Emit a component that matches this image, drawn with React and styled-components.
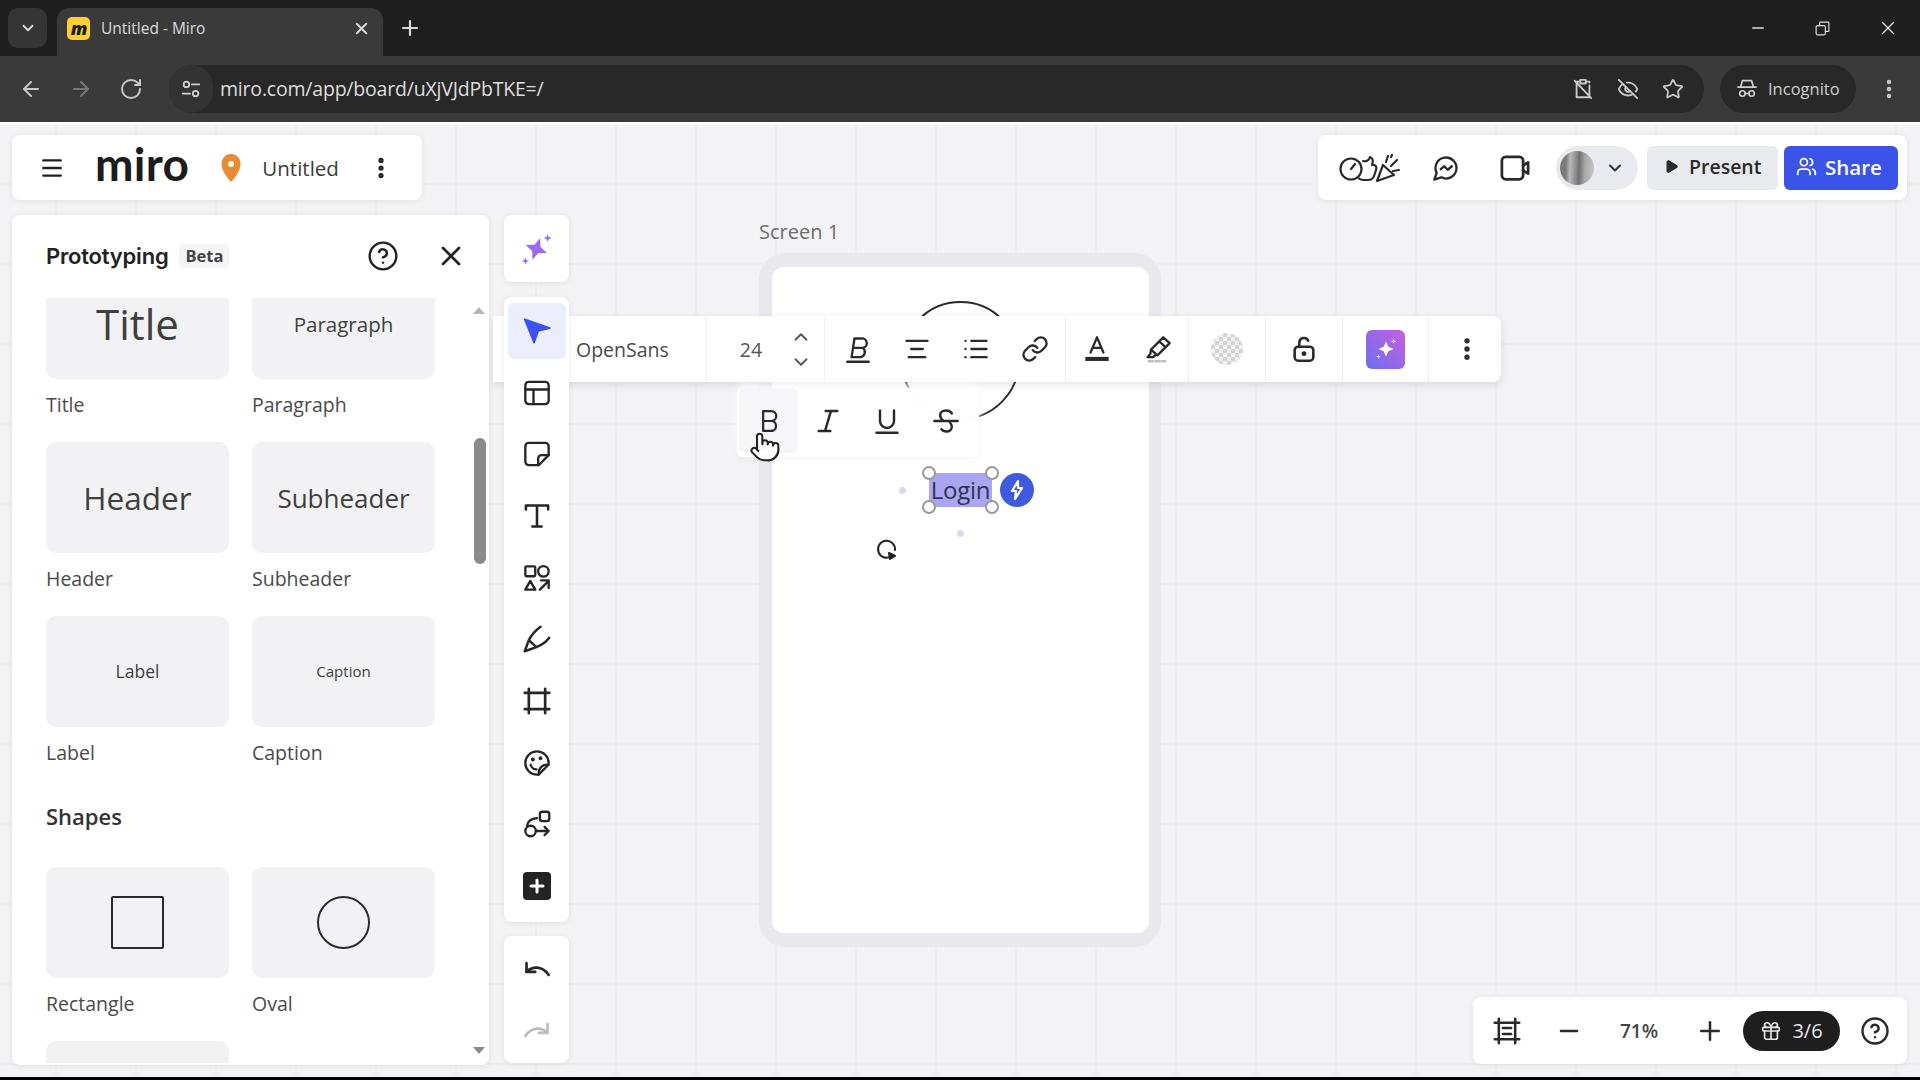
import React from 'react';
import styled, { createGlobalStyle } from 'styled-components';
import {
  ChevronDown, ChevronUp, X, Plus, Minus, ArrowLeft, ArrowRight, RotateCw, EyeOff, Star,
  EllipsisVertical, Menu, CircleHelp, Play, Users, Gift, Pointer,
  AlignCenter, List, Link,
} from 'lucide-react';

const Global = createGlobalStyle`
  html, body { margin: 0; padding: 0; background: #000; }
  body { width: 1920px; height: 1080px; overflow: hidden; font-family: "Open Sans", "Liberation Sans", sans-serif; }
  * { box-sizing: border-box; }
`;

const Page = styled.div`
  width: 1920px; height: 1077px; display: flex; flex-direction: column; overflow: hidden;
`;

/* browser chrome */
const TabStrip = styled.div`
  height: 56px; background: #1f1f1f; display: flex; align-items: flex-end; padding-left: 8px; color: #d8d8d8; flex: none;
`;
const TabMenu = styled.div`
  width: 39px; height: 40px; margin-bottom: 8px; border-radius: 10px; background: #353535; display: flex; align-items: center; justify-content: center;
`;
const Tab = styled.div`
  width: 326px; height: 48px; margin-left: 10px; background: #3a3a3a; border-radius: 12px 12px 0 0; display: flex; align-items: center; padding: 0 12px 8px 10px; position: relative;
`;
const Favicon = styled.span`
  width: 23px; height: 23px; border-radius: 5px; background: #ffd02f; color: #1c1c1c; font: italic 800 18px/22px "Open Sans", sans-serif; text-align: center; letter-spacing: -1px;
`;
const TabTitle = styled.span`
  margin-left: 11px; font: 400 15.5px "Open Sans", sans-serif; color: #dcdcdc; flex: 1;
`;
const NewTab = styled.div`
  margin: 0 0 16px 15px; height: 24px; display: flex; color: #d8d8d8;
`;
const WindowControls = styled.div`
  margin-left: auto; height: 56px; display: flex; align-items: center; color: #e0e0e0;
`;
const WindowButton = styled.div`
  width: 65px; display: flex; justify-content: center;
`;
const Toolbar = styled.div`
  height: 66px; background: #3a3a3a; display: flex; align-items: center; color: #c8c8c8; flex: none;
`;
const NavGroup = styled.div`
  display: flex; gap: 26px; padding-left: 19px;
`;
const Address = styled.div`
  margin-left: 26px; width: 1535px; height: 48px; border-radius: 24px; background: #282828; display: flex; align-items: center; padding-right: 20px;
`;
const SiteChip = styled.div`
  width: 44px; height: 48px; border-radius: 24px; background: #333; display: flex; align-items: center; justify-content: center; color: #d0d0d0;
`;
const Url = styled.span`
  margin-left: 7px; padding-bottom: 2px; font: 400 19.5px "Open Sans", sans-serif; color: #dedede; flex: 1; letter-spacing: -0.2px;
`;
const AddressIcons = styled.div`
  display: flex; gap: 23px; color: #c8c8c8;
`;
const IncognitoPill = styled.div`
  margin-left: 16px; width: 136px; height: 48px; border-radius: 24px; background: #282828; display: flex; align-items: center; padding: 0 0 2px 16px; gap: 10px; color: #d0d0d0; font: 400 16.5px "Open Sans", sans-serif;
`;
const ChromeMenu = styled.div`
  margin-left: auto; padding-right: 19px; display: flex;
`;

/* board */
const Board = styled.div`
  position: relative; flex: 1; border-top: 2px solid #fff; background-color: #f3f3f5;
  background-image: linear-gradient(#ededf0 2px, transparent 2px), linear-gradient(90deg, #ededf0 2px, transparent 2px);
  background-size: 80px 80px; background-position: 55px 59px;
  display: flex; flex-direction: column; padding: 11px 13px 12px 12px; overflow: hidden;
`;
const ChromeRow = styled.div`
  position: relative; z-index: 2; display: flex; justify-content: space-between; height: 65px; margin-bottom: 15px; flex: none;
`;
const WorkRow = styled.div`
  position: relative; z-index: 2; flex: 1; display: flex; min-height: 0;
`;
const Card = styled.div`
  background: #fff; border-radius: 8px; box-shadow: 0 1px 6px rgba(30, 30, 60, 0.08);
`;
const BoardCard = styled(Card)`
  width: 410px; display: flex; align-items: center; padding-left: 27px; color: #1f1f1f;
`;
const Logo = styled.span`
  margin-left: 30px; font: 700 46px/1 "Lato", sans-serif; letter-spacing: 0.3px; color: #1c1c1c; position: relative; top: -4px;
`;
const Pin = styled.svg`
  margin-left: 31px; width: 22px; height: 30px;
`;
const BoardName = styled.span`
  margin-left: 20px; font: 400 20.5px "Open Sans", sans-serif; color: #3a3a3a; width: 78px;
`;
const BoardMenu = styled.div`
  margin-left: 28px; display: flex;
`;
const ActionCard = styled(Card)`
  width: 589px; display: flex; align-items: center; padding-left: 21px; color: #2a2a2a;
`;
const ActionIcon = styled.div`
  margin-left: ${p => p.$ml || 0}px; display: flex;
`;
const AvatarPill = styled.div`
  margin-left: 26px; width: 82px; height: 44px; border-radius: 22px; background: #e9eaef; display: flex; align-items: center; padding-left: 4px; gap: 11px; color: #333;
`;
const Avatar = styled.div`
  width: 34px; height: 34px; border-radius: 50%; background: linear-gradient(92deg, #7a7a7a 0 18%, #b9b9b9 30%, #8a8a8a 48%, #6f6f6f 56%, #a8a8a8 72%, #c6c6c6 100%);
`;
const Present = styled.div`
  margin-left: 9px; width: 131px; height: 44px; border-radius: 6px; background: #e9eaef; display: flex; align-items: center; padding: 0 0 2px 17px; gap: 10px; color: #2a2a2a; font: 600 19.5px "Open Sans", sans-serif;
`;
const Share = styled.div`
  margin-left: 6px; width: 114px; height: 44px; border-radius: 6px; background: #3a53e8; display: flex; align-items: center; padding: 0 0 2px 12px; gap: 8px; color: #fff; font: 600 20.5px "Open Sans", sans-serif;
`;

/* left panel */
const Panel = styled(Card)`
  width: 477px; height: 850px; display: flex; flex-direction: column; flex: none;
`;
const PanelHeader = styled.div`
  height: 83px; display: flex; align-items: center; padding: 0 0 2px 34px; flex: none; color: #222;
`;
const PanelTitle = styled.span`
  font: 600 22px "Inter", sans-serif; letter-spacing: -0.2px; color: #222;
`;
const Beta = styled.span`
  margin-left: 11px; padding: 0 6px; height: 24px; background: #f4f4f6; border-radius: 4px; font: 700 16.5px/23px "Open Sans", sans-serif; color: #444;
`;
const PanelButtons = styled.div`
  margin-left: auto; display: flex; align-items: center; gap: 36px; padding-right: 22px;
`;
const ScrollArea = styled.div`
  position: relative; flex: 1; overflow: hidden; padding: 0 34px; margin-bottom: 2px; border-radius: 0 0 8px 8px;
`;
const ItemGrid = styled.div`
  display: grid; grid-template-columns: 183px 183px; column-gap: 23px; row-gap: 25px;
`;
const Tile = styled.div`
  height: 111px; border-radius: 10px; background: #f2f2f4; display: flex; align-items: center; justify-content: center; color: #3f3f3f;
  font: 400 ${p => p.$size}px/1 "Open Sans", sans-serif;
  ${p => (p.$cutTop ? 'height: 81px; padding-bottom: 29px; border-radius: 0 0 10px 10px;' : '')}
`;
const ItemLabel = styled.div`
  margin-top: 14px; height: 24px; font: 400 19.5px/24px "Open Sans", sans-serif; color: #4a4a4a;
`;
const SectionTitle = styled.div`
  margin: 37px 0 37px; font: 600 22px/28px "Open Sans", sans-serif; color: #333;
`;
const ScrollThumb = styled.div`
  position: absolute; left: 462px; top: 140px; width: 12px; height: 126px; border-radius: 6px; background: #8a8a8a;
`;
const ScrollArrow = styled.div`
  position: absolute; left: 461px; ${p => (p.$up ? 'top: 9px;' : 'bottom: 9px;')}
  width: 0; height: 0; border-left: 6px solid transparent; border-right: 6px solid transparent;
  ${p => (p.$up ? 'border-bottom: 7px solid #b5b5b5;' : 'border-top: 7px solid #8a8a8a;')}
`;
const RectShape = styled.div`
  width: 53px; height: 53px; border: 2.5px solid #2b2b2b; border-radius: 2px;
`;
const OvalShape = styled.div`
  width: 53px; height: 53px; border: 2.5px solid #2b2b2b; border-radius: 50%;
`;

/* tool column */
const ToolColumn = styled.div`
  margin-left: 15px; width: 65px; display: flex; flex-direction: column; flex: none;
`;
const ToolCard = styled(Card)`
  padding: ${p => p.$pad || '3px 0 5px'}; margin-bottom: ${p => p.$mb || 0}px; display: flex; flex-direction: column; align-items: center;
`;
const ToolButton = styled.div`
  width: 100%; height: ${p => p.$h || 61.7}px; display: flex; align-items: center; justify-content: center; color: ${p => p.$color || '#262626'};
  position: relative;
`;
const ActiveBack = styled.div`
  position: absolute; left: 4px; right: 3px; top: 3px; bottom: 3px; border-radius: 6px; background: #eceefc;
`;
const ArrowGlyph = styled.svg`
  position: relative; width: 28px; height: 28px;
`;
const ZoomBar = styled(Card)`
  margin-left: auto; align-self: flex-end; width: 434px; height: 67px; display: flex; align-items: center; padding-left: 20px; color: #2a2a2a; margin-bottom: 1px;
`;
const ZoomValue = styled.span`
  width: 70px; margin: 0 21px 0 21px; text-align: center; font: 600 19px "Open Sans", sans-serif; color: #444;
`;
const GiftPill = styled.div`
  margin-left: 18px; width: 97px; height: 40px; border-radius: 20px; background: #1e1e1e; color: #e8e8e8; display: flex; align-items: center; justify-content: center; gap: 10px; font: 400 20px "Open Sans", sans-serif;
`;

/* items on the canvas */
const Artboard = styled.div`
  position: absolute; inset: 0; z-index: 1;
`;
const FrameLabel = styled.span`
  position: absolute; left: 759px; top: 94px; font: 400 20px "Open Sans", sans-serif; color: #6c6c6c;
`;
const PhoneFrame = styled.div`
  position: absolute; left: 759px; top: 129px; width: 402px; height: 694px; border-radius: 26px; background: #e9e9ed;
`;
const PhoneScreen = styled.div`
  position: absolute; left: 13px; top: 14px; width: 377px; height: 666px; border-radius: 12px; background: #fff;
`;
const ProfileCircle = styled.div`
  position: absolute; left: 901px; top: 177px; width: 119px; height: 119px; border-radius: 50%; border: 2px solid #2a2a2a;
`;
const Selection = styled.div`
  position: absolute; left: 929px; top: 349px; width: 63px; height: 34px; background: #aaa6f4; color: #33334f; font: 400 24px/33px "Open Sans", sans-serif; text-align: center; letter-spacing: -0.3px;
`;
const Handle = styled.span`
  position: absolute; ${p => (p.$r ? 'right: -7px;' : 'left: -7px;')} ${p => (p.$b ? 'bottom: -7px;' : 'top: -7px;')}
  width: 14px; height: 14px; border-radius: 50%; background: #fff; border: 2px solid #9a9a9a;
`;
const Bolt = styled.div`
  position: absolute; left: 1000px; top: 349px; width: 34px; height: 34px; border-radius: 50%; background: #3e5ae0; color: #fff; display: flex; align-items: center; justify-content: center;
`;
const Dot = styled.span`
  position: absolute; left: ${p => p.$x}px; top: ${p => p.$y}px; width: 7px; height: 7px; border-radius: 50%; background: #d8d9f5;
`;
const RotateMark = styled.div`
  position: absolute; left: 876px; top: 412px; display: flex; color: #222;
`;
const FormatBar = styled.div`
  position: absolute; left: 493px; top: 192px; width: 1008px; height: 66px; background: #fff; border-radius: 0 8px 8px 0; display: flex; box-shadow: 0 3px 8px rgba(30, 30, 60, 0.12); color: #2a2a2a;
`;
const FormatSection = styled.div`
  width: ${p => p.$w}px; height: 100%; display: flex; align-items: center; justify-content: ${p => p.$justify || 'space-around'};
  border-right: ${p => (p.$last ? 'none' : '1px solid #f1f1f3')}; flex: none; padding: ${p => p.$pad || 0};
`;
const FontName = styled.span`
  font: 400 19.5px "Open Sans", sans-serif; color: #4a4a4a;
`;
const SizeValue = styled.span`
  font: 400 19.5px "Open Sans", sans-serif; color: #555; width: 46px; margin-left: 21px; text-align: center;
`;
const Stepper = styled.div`
  margin-left: 16px; display: flex; flex-direction: column; gap: 3px; color: #555;
`;
const Opacity = styled.div`
  width: 32px; height: 32px; border-radius: 50%; background: repeating-conic-gradient(#d4d4d4 0 25%, #f2f2f2 0 50%) 0 0 / 8px 8px;
`;
const AiSquare = styled.div`
  width: 39px; height: 39px; border-radius: 6px; background: linear-gradient(45deg, #6a70f0, #c75fe0); color: #fff; display: flex; align-items: center; justify-content: center;
`;
const StyleBar = styled.div`
  position: absolute; left: 737px; top: 264px; width: 242px; height: 69px; padding: 0 0 4px 2px; background: rgba(255, 255, 255, 0.98); border-radius: 6px; display: flex; align-items: center; box-shadow: 0 -3px 8px rgba(255, 255, 255, 0.95), 0 2px 8px rgba(30, 30, 60, 0.05); color: #2a2a2a;
`;
const StyleButton = styled.div`
  width: 59px; height: 100%; display: flex; align-items: center; justify-content: center; background: ${p => (p.$on ? '#f6f6f8' : 'transparent')}; border-radius: 6px;
`;
const HandCursor = styled.div`
  position: absolute; left: 749px; top: 307px; display: flex; color: #222;
`;

const I = ({ s = 28, w = 2, vb = '0 0 24 24', children, fill = 'none', width }) => (
  <svg width={width || s} height={s} viewBox={vb} fill={fill} stroke="currentColor" strokeWidth={w} strokeLinecap="round" strokeLinejoin="round">{children}</svg>
);

const Sparkle = ({ s = 34, color = '#9a6bf0' }) => (
  <svg width={s} height={s} viewBox="0 0 24 24" fill={color}>
    <path transform="rotate(20 11.500 12)" d="M11.500 4l2.300 5.700 5.700 2.300-5.700 2.300-2.300 5.700-2.300-5.700L3.500 12l5.700-2.300z" />
    <path d="M19.500 1.500l.8 2 2 .8-2 .8-.8 2-.8-2-2-.8 2-.8z" />
    <path d="M3.800 18l.7 1.800 1.800.7-1.800.7-.7 1.800-.7-1.800-1.800-.7 1.800-.7z" />
  </svg>
);
const FourStar = () => (
  <svg width="28" height="28" viewBox="0 0 24 24" fill="currentColor">
    <path d="M12 5.500l2 4.500 4.500 2-4.500 2-2 4.500-2-4.500-4.500-2 4.500-2z" />
    <path d="M18.500 3l.6 1.900 1.900.6-1.900.6-.6 1.900-.6-1.900-1.900-.6 1.900-.6z" />
    <path d="M5.500 16.500l.5 1.500 1.500.5-1.500.5-.5 1.500-.5-1.500-1.500-.5 1.500-.5z" />
  </svg>
);

const tiles = [
  ['Title', 'Title', 42], ['Paragraph', 'Paragraph', 20.5],
  ['Header', 'Header', 31.5], ['Subheader', 'Subheader', 26],
  ['Label', 'Label', 17.5], ['Caption', 'Caption', 15],
];

export default function App() {
  return (
    <Page>
      <Global />
      <TabStrip>
        <TabMenu><ChevronDown size={18} strokeWidth={2.5} /></TabMenu>
        <Tab>
          <Favicon>m</Favicon>
          <TabTitle>Untitled - Miro</TabTitle>
          <X size={19} strokeWidth={2.5} />
        </Tab>
        <NewTab><Plus size={24} strokeWidth={2.2} /></NewTab>
        <WindowControls>
          <WindowButton><Minus size={18} /></WindowButton>
          <WindowButton>
            <I s={17} w={1.6}><rect x="3" y="8" width="13" height="13" rx="2" /><path d="M8 8V4a1 1 0 0 1 1-1h11a1 1 0 0 1 1 1v11a1 1 0 0 1-1 1h-4" /></I>
          </WindowButton>
          <WindowButton><X size={22} strokeWidth={1.5} /></WindowButton>
        </WindowControls>
      </TabStrip>
      <Toolbar>
        <NavGroup>
          <ArrowLeft size={24} strokeWidth={2} />
          <ArrowRight size={24} strokeWidth={2} color="#777" />
          <RotateCw size={24} strokeWidth={2} />
        </NavGroup>
        <Address>
          <SiteChip>
            <I s={22} w={2}><circle cx="7" cy="7" r="3" /><path d="M13 7h8M3 17h8" /><circle cx="17" cy="17" r="3" /></I>
          </SiteChip>
          <Url>miro.com/app/board/uXjVJdPbTKE=/</Url>
          <AddressIcons>
            <I s={22} w={2}><path d="M8 4H5v17h14V8M15 4h4v1M9 2h6v4H9zM3 3l18 19" /></I>
            <EyeOff size={22} strokeWidth={2} />
            <Star size={22} strokeWidth={2} />
          </AddressIcons>
        </Address>
        <IncognitoPill>
          <I s={22} w={1.8}><path d="M5 11l2-7h10l2 7M2 11h20" /><circle cx="7" cy="18" r="3" /><circle cx="17" cy="18" r="3" /><path d="M10 18h4" /></I>
          Incognito
        </IncognitoPill>
        <ChromeMenu><EllipsisVertical size={24} strokeWidth={2.5} /></ChromeMenu>
      </Toolbar>
      <Board>
        <Artboard>
          <FrameLabel>Screen 1</FrameLabel>
          <PhoneFrame><PhoneScreen /></PhoneFrame>
          <ProfileCircle />
          <Dot $x={899} $y={363} />
          <Dot $x={957} $y={406} />
          <Selection>
            Login
            <Handle /><Handle $r /><Handle $b /><Handle $r $b />
          </Selection>
          <Bolt><I s={24} w={2.2}><path d="M13 3L7 13h4l-1 8 7-11h-4z" /></I></Bolt>
          <RotateMark>
            <I s={24} w={2}><path d="M15 20.500a8.500 8.500 0 1 1 4-6.500" /><path d="M13 17l6 3-5 3z" fill="currentColor" /></I>
          </RotateMark>
          <FormatBar>
            <FormatSection $w={214} $justify="flex-start" $pad="0 0 0 83px"><FontName>OpenSans</FontName></FormatSection>
            <FormatSection $w={118} $justify="flex-start">
              <SizeValue>24</SizeValue>
              <Stepper><ChevronUp size={22} /><ChevronDown size={22} /></Stepper>
            </FormatSection>
            <FormatSection $w={241} $pad="0 0 0 3px">
              <I><path d="M9 3h6a4 4 0 0 1 1 8 4.500 4.500 0 0 1-1.500 8H6.500zM7.800 11h8.200" /><path d="M3 23h18" strokeWidth="2.4" /></I>
              <AlignCenter size={28} strokeWidth={2} />
              <List size={28} strokeWidth={2} />
              <Link size={28} strokeWidth={2} />
            </FormatSection>
            <FormatSection $w={123}>
              <I><path d="M6.500 15L12 2l5.500 13M8.500 11h7" /><path d="M2 20.500h20" strokeWidth="3.500" strokeLinecap="butt" /></I>
              <I><path d="M16.500 2l5.500 5-10.500 10.500-5.500-5zM6 12.500l-.5 3.500-2.500 3h5l1.500-1.500M13 5.500l5.500 5" /><path d="M4 22.500h14" stroke="#bdbdbd" strokeDasharray="4 2" /></I>
            </FormatSection>
            <FormatSection $w={77}><Opacity /></FormatSection>
            <FormatSection $w={77}>
              <I w={2.2}><rect x="4" y="10" width="16" height="12" rx="3" /><circle cx="12" cy="16" r="1" fill="currentColor" /><path d="M8 10V6.500a4 4 0 0 1 7.600-1.700" /></I>
            </FormatSection>
            <FormatSection $w={86}><AiSquare><FourStar /></AiSquare></FormatSection>
            <FormatSection $w={72} $last $pad="0 0 0 4px"><EllipsisVertical size={28} strokeWidth={2.6} /></FormatSection>
          </FormatBar>
          <StyleBar>
            <StyleButton $on>
              <I w={1.9}><path d="M7 3.500h7a4.200 4.200 0 0 1 0 8.500H7zM7 12h8a4.500 4.500 0 0 1 0 8.500H7z" /></I>
            </StyleButton>
            <StyleButton>
              <I w={2.1}><path d="M10 3.500h10M4 20.500h10M14.500 3.500l-5 17" /></I>
            </StyleButton>
            <StyleButton>
              <I w={2.1}><path d="M6 3v9a6 6 0 0 0 12 0V3M3 22h18" /></I>
            </StyleButton>
            <StyleButton>
              <I w={2.1}><path d="M2 12h20M17 5.500C16 3.500 14 3 12 3c-3 0-5 1.500-5 4 0 2 1 3.500 3 5M8 19c1 1.500 2.500 2 4.500 2 2.500 0 4.500-1.500 4.500-4 0-1.500-.5-2.500-1.500-3.500" /></I>
            </StyleButton>
          </StyleBar>
          <HandCursor><Pointer size={32} strokeWidth={1.5} fill="#fff" /></HandCursor>
        </Artboard>

        <ChromeRow>
          <BoardCard>
            <Menu size={26} strokeWidth={2.2} />
            <Logo>miro</Logo>
            <Pin viewBox="0 0 22 30">
              <path d="M11 1C5 1 1.500 5.500 1.500 11c0 6 5 13 9.500 18 4.500-5 9.500-12 9.500-18C20.500 5.500 17 1 11 1z" fill="#e98a34" />
              <circle cx="11" cy="11" r="3" fill="#fff" />
            </Pin>
            <BoardName>Untitled</BoardName>
            <BoardMenu><EllipsisVertical size={26} strokeWidth={2.8} /></BoardMenu>
          </BoardCard>
          <ActionCard>
            <ActionIcon>
              <I s={32} width={61} vb="0 0 61 32" w={2.2}>
                <circle cx="12" cy="17" r="10.500" />
                <path d="M12 17l4-5" />
                <path d="M24 9c2 .5 6 .5 7-4 3 1 3.500 4 2 8 4-.5 5 2 4 5l-2 6c-1 3-3 4-6 4h-4c-2 0-4-.5-5-1.500" />
                <path d="M38 29l6-16 11 10zM47 10l2-6M52 14l6-6M54 19l6-1M52 5l1-2" />
              </I>
            </ActionIcon>
            <ActionIcon $ml={32}>
              <I>
                <path d="M7.900 20A9 9 0 1 0 4 16.100L2 22z" />
                <path d="M7.500 13l3-2.500 3 3 3.500-3" />
              </I>
            </ActionIcon>
            <ActionIcon $ml={40}>
              <I s={30} w={2.2}><rect x="1.500" y="3" width="17" height="18" rx="3" /><path d="M18.500 10l4-2.500v9l-4-2.500" /></I>
            </ActionIcon>
            <AvatarPill><Avatar /><ChevronDown size={20} strokeWidth={2.4} /></AvatarPill>
            <Present><Play size={15} fill="currentColor" />Present</Present>
            <Share><Users size={21} strokeWidth={2} />Share</Share>
          </ActionCard>
        </ChromeRow>

        <WorkRow>
          <Panel>
            <PanelHeader>
              <PanelTitle>Prototyping</PanelTitle>
              <Beta>Beta</Beta>
              <PanelButtons>
                <CircleHelp size={32} strokeWidth={1.8} />
                <X size={32} strokeWidth={2} />
              </PanelButtons>
            </PanelHeader>
            <ScrollArea>
              <ItemGrid>
                {tiles.map(([text, label, size], i) => (
                  <div key={label}>
                    <Tile $size={size} $cutTop={i < 2}>{text}</Tile>
                    <ItemLabel>{label}</ItemLabel>
                  </div>
                ))}
              </ItemGrid>
              <SectionTitle>Shapes</SectionTitle>
              <ItemGrid>
                <div><Tile><RectShape /></Tile><ItemLabel>Rectangle</ItemLabel></div>
                <div><Tile><OvalShape /></Tile><ItemLabel>Oval</ItemLabel></div>
                <div><Tile /></div>
              </ItemGrid>
              <ScrollArrow $up />
              <ScrollThumb />
              <ScrollArrow />
            </ScrollArea>
          </Panel>
          <ToolColumn>
            <ToolCard $pad="0" $mb={15}>
              <ToolButton $h={67}><Sparkle /></ToolButton>
            </ToolCard>
            <ToolCard $mb={14}>
              <ToolButton $color="#3d50f0">
                <ActiveBack />
                <ArrowGlyph viewBox="0 0 24 24" fill="currentColor" stroke="currentColor" strokeWidth="1.5" strokeLinejoin="round">
                  <path d="M1.500 2l21.500 7.500-10 2.500-3.500 10z" />
                </ArrowGlyph>
              </ToolButton>
              <ToolButton><I><rect x="2" y="2.500" width="20" height="19" rx="3" /><path d="M2 9h20M9 9v12.500" /></I></ToolButton>
              <ToolButton><I><path d="M5 2.500h14a3 3 0 0 1 3 3V13l-8.500 8.500H5a3 3 0 0 1-3-3V5.500a3 3 0 0 1 3-3z" /><path d="M22 13h-6a3 3 0 0 0-3 3v5.500" /></I></ToolButton>
              <ToolButton><I w={2.2}><path d="M2.500 6.500V3h19v3.500M12 3v18M8 21h8" /></I></ToolButton>
              <ToolButton><I><rect x="2" y="2" width="8.500" height="8.500" rx="1" /><circle cx="17.500" cy="6.300" r="4.500" /><path d="M6.200 14.500l4.300 7.500H2zM14.500 22l7.500-7.500M15.500 14h6.500v6.500" /></I></ToolButton>
              <ToolButton><I w={2.1}><path d="M1.500 22.500L5 13C7 9 11 4.500 15 1.500M1.500 22.500l10-3.500c4-1.500 8-4 11-8M5 13l6.500 6" /></I></ToolButton>
              <ToolButton><I w={2.3}><path d="M5 1.500v21M19 1.500v21M1.500 5h21M1.500 19h21" /></I></ToolButton>
              <ToolButton>
                <I w={2}>
                  <path d="M12 2a10 10 0 0 1 10 10c0 .5 0 1-.1 1.500l-8.400 8.400c-.5.1-1 .1-1.500.1a10 10 0 0 1 0-20z" />
                  <path d="M21.900 13.500c-4.500-.8-8.800 2.500-8.400 8.400" />
                  <path d="M6.500 13.500c.8 2.500 2.500 4 5 4" />
                  <circle cx="8.500" cy="9" r=".7" fill="currentColor" />
                  <circle cx="15" cy="8" r=".7" fill="currentColor" />
                </I>
              </ToolButton>
              <ToolButton><I w={2}><rect x="14.500" y="1.500" width="8" height="8" rx="2" /><circle cx="6.500" cy="18" r="4.500" /><path d="M11 18h11M18.500 14.500L22 18l-3.500 3.500M3.500 13.500C4 10 6.500 7.500 12 7" /></I></ToolButton>
              <ToolButton>
                <svg width="28" height="28" viewBox="0 0 28 28"><rect width="28" height="28" rx="4" fill="#242424" /><path d="M14 8v12M8 14h12" stroke="#fff" strokeWidth="3" strokeLinecap="round" /></svg>
              </ToolButton>
            </ToolCard>
            <ToolCard $pad="2px 0">
              <ToolButton><I w={2.3}><path d="M3 7v7.500h7.500" /><path d="M3 14.500C8 9.500 16 9 22 17" /></I></ToolButton>
              <ToolButton $color="#bdbdbd"><I w={2.3}><path d="M21 7v7.500h-7.500" /><path d="M21 14.500C16 9.500 8 9 2 17" /></I></ToolButton>
            </ToolCard>
          </ToolColumn>
          <ZoomBar>
            <I w={2.2}><path d="M5 1.500v21M19 1.500v21M1.500 5h21M1.500 19h21M8.500 9.500h7M8.500 14.500h7" /></I>
            <ActionIcon $ml={34}><Minus size={28} strokeWidth={2} /></ActionIcon>
            <ZoomValue>71%</ZoomValue>
            <Plus size={30} strokeWidth={2} />
            <GiftPill><Gift size={22} strokeWidth={1.8} />3/6</GiftPill>
            <ActionIcon $ml={20}><CircleHelp size={30} strokeWidth={1.9} /></ActionIcon>
          </ZoomBar>
        </WorkRow>
      </Board>
    </Page>
  );
}
